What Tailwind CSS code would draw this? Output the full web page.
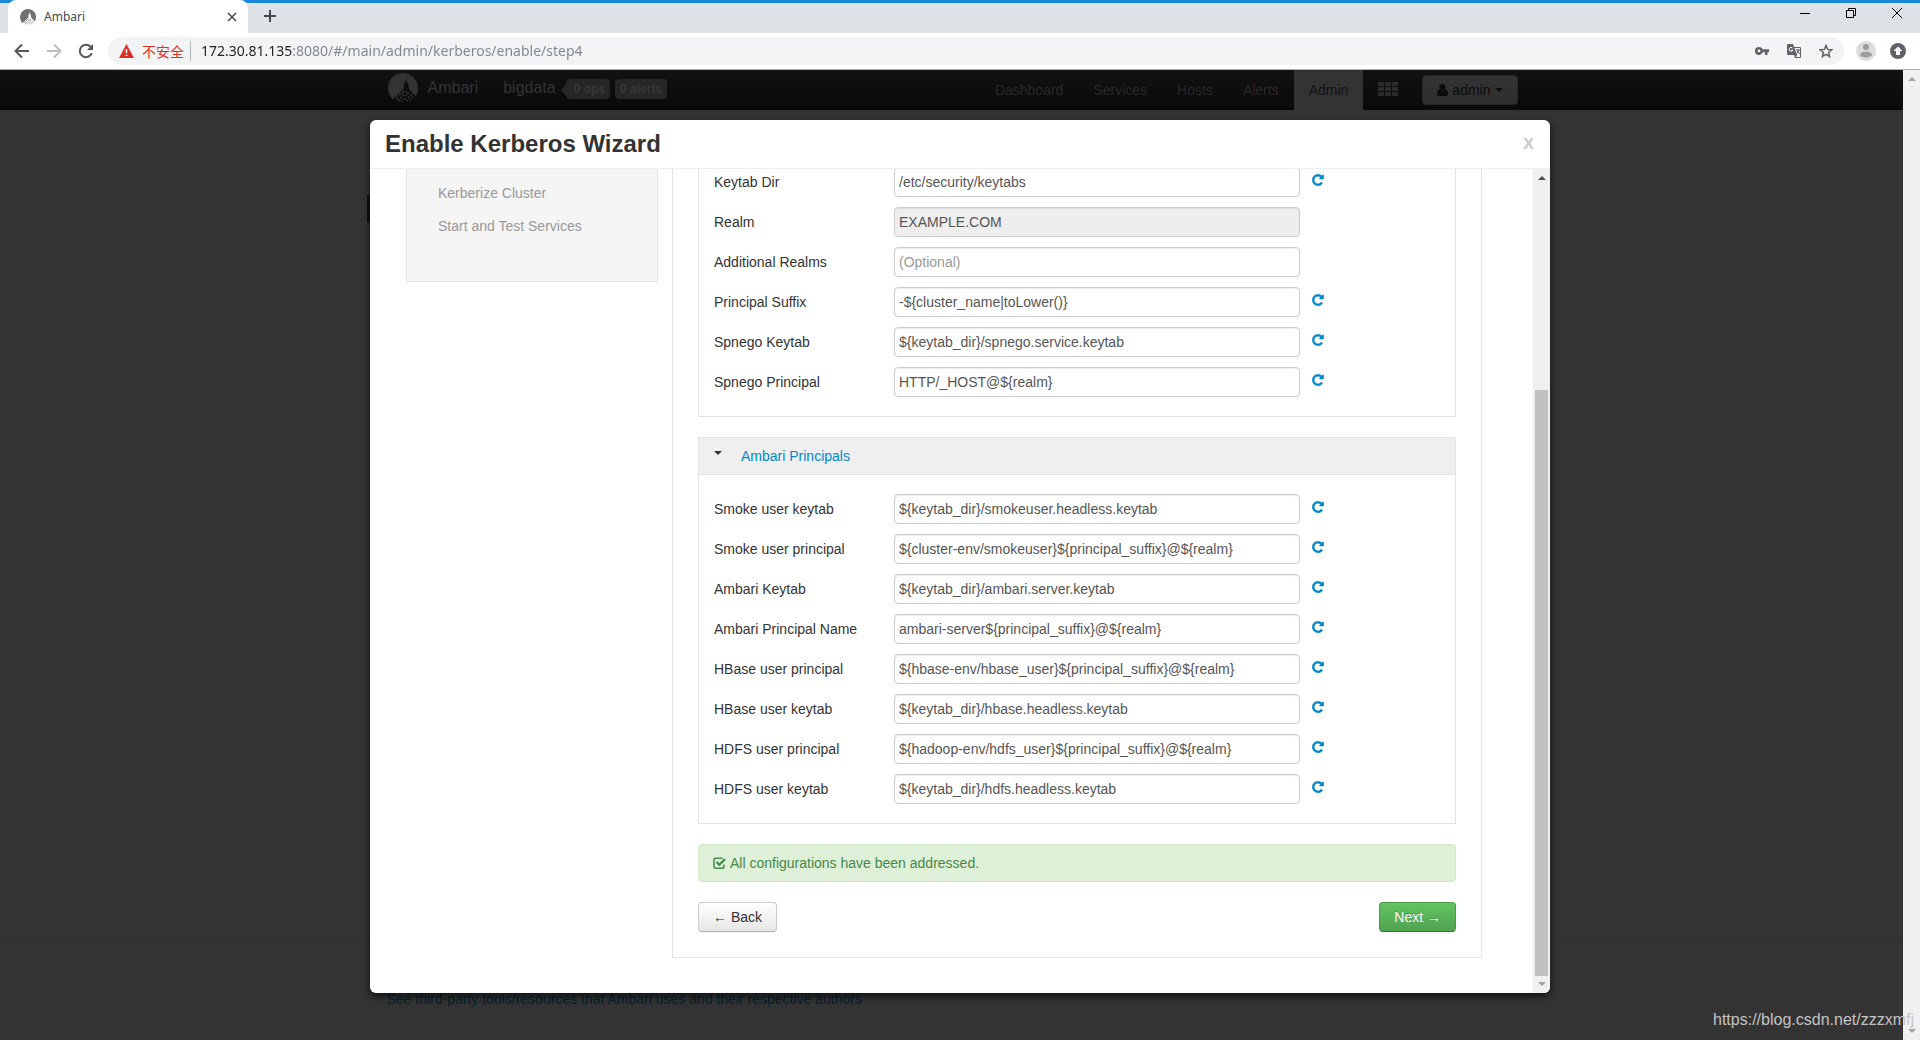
<!DOCTYPE html>
<html lang="en">
<head>
<meta charset="utf-8">
<title>Ambari</title>
<script src="https://cdn.jsdelivr.net/npm/@tailwindcss/browser@4"></script>
</head>
<body class="flex h-screen flex-col overflow-hidden bg-[#333] font-['Liberation_Sans',Arial,sans-serif] text-sm leading-5 text-[#333]">
<svg class="hidden" aria-hidden="true">
  <symbol id="refresh" viewBox="-40 -40 1616 1616"><path fill="currentColor" stroke="currentColor" stroke-width="70" d="M1536 128v448q0 26-19 45t-45 19h-448q-42 0-59-40-17-39 14-69l138-138q-148-137-349-137-104 0-198.500 40.500t-163.500 109.500-109.500 163.500-40.500 198.500 40.500 198.500 109.500 163.500 163.500 109.500 198.500 40.500q119 0 225-52t179-147q7-10 23-12 14 0 25 9l137 138q9 8 9.500 20.500t-7.500 22.500q-109 132-264 204.500t-327 72.500q-156 0-298-61t-245-164-164-245-61-298 61-298 164-245 245-164 298-61q147 0 284.500 55.500t244.500 156.500l130-129q29-31 70-14 39 17 39 59z"/></symbol>
  <symbol id="logo" viewBox="0 0 30 30"><path fill="currentColor" d="M5 26.200A15 15 0 1 1 27.500 23.300L21 16 20 10.500 18.700 8.500 18.200 4 17.700 8.500 16.300 10.500 15.500 16z"/><path fill="none" stroke="currentColor" stroke-width="1.400" stroke-dasharray="3.500 1" d="M8 26.500q3.500-6 8.500-8 6 1.500 9 7"/><path fill="none" stroke="currentColor" stroke-width="1.800" stroke-dasharray="2 1.200" d="M10.500 28.300q2-5 6-6.500 4.500 1.500 6 5.500"/><path fill="none" stroke="currentColor" stroke-width="1.500" stroke-dasharray="1.500 1" d="M13.500 29q1-3 3-3.500 2 .5 3 3"/></symbol>
</svg>

<!-- Browser tab strip -->
<header class="shrink-0 bg-[#dee1e6]">
  <div class="flex h-[33px] items-stretch border-t-[3px] border-[#1a86d9]">
    <div class="w-2 rounded-br-lg"></div>
    <div class="-mt-[3px] flex w-60 items-center rounded-t-lg bg-white pr-[11px] pl-3">
      <svg class="size-4 text-[#707070]"><use href="#logo"/></svg>
      <span class="ml-2 flex-1 font-['Noto_Sans',sans-serif] text-xs text-[#45494d]">Ambari</span>
      <button aria-label="Close tab"><svg class="size-[10px]" viewBox="0 0 10 10" stroke="#45494d" stroke-width="1.500"><path d="M1 1l8 8M9 1l-8 8"/></svg></button>
    </div>
    <button aria-label="New tab" class="ml-4 pb-1"><svg class="size-3" viewBox="0 0 12 12" stroke="#45494d" stroke-width="2"><path d="M6 0v12M0 6h12"/></svg></button>
    <div class="flex-1"></div>
    <div class="flex items-center gap-9 pr-[18px] pb-[10px]">
      <button aria-label="Minimize"><svg class="size-[10px]" viewBox="0 0 10 10" stroke="#000"><path d="M0 5.500h10"/></svg></button>
      <button aria-label="Restore"><svg class="size-[10px]" viewBox="0 0 10 10" stroke="#000" fill="none"><path d="M.5 2.500h7v7h-7zM2.500 2.500v-2h7v7h-2"/></svg></button>
      <button aria-label="Close window"><svg class="size-[10px]" viewBox="0 0 10 10" stroke="#000"><path d="M0 0l10 10M10 0l-10 10"/></svg></button>
    </div>
  </div>
</header>

<!-- Toolbar -->
<div class="flex h-[37px] shrink-0 items-center border-b border-[#b0b0b0] bg-white">
  <div class="flex w-[108px] items-center gap-4 pl-[14px]">
    <button aria-label="Back"><svg class="size-4" viewBox="0 0 16 16" fill="none" stroke="#55595d" stroke-width="2"><path d="M15 8H2M8 1.500L1.500 8 8 14.500"/></svg></button>
    <button aria-label="Forward"><svg class="size-4" viewBox="0 0 16 16" fill="none" stroke="#babcbe" stroke-width="2"><path d="M1 8h13M8 1.500L14.500 8 8 14.500"/></svg></button>
    <button aria-label="Reload"><svg class="size-4" viewBox="0 0 16 16" fill="none" stroke="#55595d" stroke-width="2"><path d="M13.800 10.200A6.200 6.200 0 1 1 12.500 3.700L14 5.200"/><path fill="#55595d" stroke="none" d="M15 1v6H9z"/></svg></button>
  </div>
  <div class="flex h-7 flex-1 items-center rounded-full bg-[#f1f3f4] px-[11px]">
    <svg class="h-[14px] w-[15px]" viewBox="0 0 15 14"><path fill="#d93025" d="M7.500 0L15 14H0z"/><path stroke="#fff" stroke-width="1.500" d="M7.500 5v4M7.500 10.500V12"/></svg>
    <span class="ml-2 font-['Noto_Sans_CJK_SC',sans-serif] text-sm text-[#d93025]">不安全</span>
    <span class="mr-[10px] ml-[6px] h-5 w-px bg-[#b4b7ba]"></span>
    <!-- The host part is drawn darker than the path -->
    <input type="text" aria-label="Address" value="172.30.81.135:8080/#/main/admin/kerberos/enable/step4" class="min-w-0 flex-1 bg-[linear-gradient(to_right,#202124_91px,#80868b_91px)] bg-clip-text font-['Noto_Sans',sans-serif] text-sm text-transparent">
    <div class="flex items-center gap-[18px]">
      <svg class="size-[14px]" viewBox="0 0 14 14"><path fill="#5f6368" fill-rule="evenodd" d="M4 3a4 4 0 1 0 3.700 5.300H10V11h2.500V8.300H14V5.300H7.700A4 4 0 0 0 4 3zm0 2.600a1.300 1.300 0 1 1 0 2.700 1.300 1.300 0 0 1 0-2.700z"/></svg>
      <svg class="size-[14px]" viewBox="0 0 14 14"><path fill="#5f6368" d="M1 0h5l1 3h6q1 0 1 1v9q0 1-1 1H8l-1-3H1q-1 0-1-1V1q0-1 1-1z"/><path fill="#f1f3f4" d="M7.500 4H13v9H9l1-2z"/><path fill="none" stroke="#f1f3f4" d="M5.500 4A2 2 0 1 0 6 6H4"/><path fill="none" stroke="#5f6368" d="M9 6h4M11 5v1M12 6q-1 3-3 4M10 7l3 3"/></svg>
      <svg class="size-[14px]" viewBox="0 0 14 14" fill="none" stroke="#5f6368" stroke-width="1.500"><path d="M7 1.500l1.600 3.900 4.200.3-3.200 2.700 1 4.100L7 10.300l-3.600 2.200 1-4.100L1.200 5.700l4.200-.3z"/></svg>
    </div>
  </div>
  <div class="flex items-center gap-[14px] pr-[14px] pl-3">
    <svg class="size-5" viewBox="0 0 20 20"><circle cx="10" cy="10" r="10" fill="#dcdcdc"/><circle cx="10" cy="6" r="3" fill="#9c9c9c"/><ellipse cx="10" cy="13.500" rx="6" ry="3" fill="#9c9c9c"/></svg>
    <svg class="size-4" viewBox="0 0 16 16"><circle cx="8" cy="8" r="8" fill="#5f6368"/><path fill="#fff" d="M8 3.500L12.500 8H10v4H6V8H3.500z"/></svg>
  </div>
</div>

<!-- Page viewport -->
<div class="relative flex min-h-0 flex-1">
  <div class="flex min-w-0 flex-1 flex-col">
    <nav class="flex h-10 shrink-0 bg-linear-to-b from-[#121212] to-[#090909]">
      <div class="mx-auto flex w-full max-w-[1170px] items-center pr-[19px] pl-[21px]">
        <svg class="mb-1 size-[30px] text-[#333]"><use href="#logo"/></svg>
        <a href="#" class="ml-[10px] pb-1 text-base text-[#333]">Ambari</a>
        <a href="#" class="ml-[25px] pb-1 text-base text-[#333]">bigdata</a>
        <span class="ml-[5px] h-0 w-0 border-y-[6px] border-r-[5px] border-y-transparent border-r-[#262626]"></span>
        <a href="#" class="mb-[2px] h-5 rounded bg-[#262626] pr-[5px] pl-2 text-xs leading-5 font-bold text-[#383838]">0 ops</a>
        <a href="#" class="mb-[2px] ml-[5px] h-5 rounded bg-[#262626] px-[5px] text-xs leading-5 font-bold text-[#383838]">0 alerts</a>
        <div class="ml-auto flex h-10 items-stretch leading-10 text-[#292929]">
          <a href="#" class="px-[15px]">Dashboard</a>
          <a href="#" class="px-[15px]">Services</a>
          <a href="#" class="px-[15px]">Hosts</a>
          <a href="#" class="px-[15px]">Alerts</a>
          <a href="#" class="bg-[#333] px-[15px] text-[#111]">Admin</a>
          <button aria-label="Views" class="flex items-center pr-6 pb-[2px] pl-[15px]"><svg class="h-[14px] w-5" viewBox="0 0 20 14" fill="#2c2c2c"><path d="M0 0h6v4H0zM7 0h6v4H7zM14 0h6v4h-6zM0 5h6v4H0zM7 5h6v4H7zM14 5h6v4h-6zM0 10h6v4H0zM7 10h6v4H7zM14 10h6v4h-6z"/></svg></button>
          <button class="my-[5px] flex items-center rounded border border-[#262626] bg-linear-to-b from-[#333] to-[#2e2e2e] px-[14px] leading-5 text-[#0c0c0c]">
            <svg class="mr-1 h-3 w-[11px]" viewBox="0 0 11 12" fill="#0a0a0a"><circle cx="5.500" cy="3" r="3"/><path d="M2.500 5.300q3 2.200 6 0Q11 6 11 10q0 2-2 2H2q-2 0-2-2 0-4 2.500-4.700z"/></svg>admin
            <span class="ml-1 h-0 w-0 border-x-4 border-t-4 border-x-transparent border-t-[#0a0a0a]"></span>
          </button>
        </div>
      </div>
    </nav>
    <div class="min-h-0 flex-1 pt-[85px]">
      <div class="mx-auto h-7 w-full max-w-[1170px] bg-[#111]"></div>
    </div>
    <footer class="h-[101px] shrink-0 border-t border-[#2d2d2d]">
      <div class="mx-auto w-full max-w-[1170px] px-5 pt-[49px]">
        <a href="#" class="text-[#06202e]">See third-party tools/resources that Ambari uses and their respective authors</a>
      </div>
    </footer>
  </div>
  <!-- Window scrollbar -->
  <div class="flex w-[17px] shrink-0 flex-col items-center justify-between bg-[#f0f0f0] py-[7px]">
    <span class="h-0 w-0 border-x-4 border-b-4 border-x-transparent border-b-[#a3a3a3]"></span>
    <span class="h-0 w-0 border-x-4 border-t-4 border-x-transparent border-t-[#a3a3a3]"></span>
  </div>

  <!-- Wizard dialog -->
  <div role="dialog" aria-labelledby="wizard-title" class="absolute inset-x-0 top-[50px] bottom-[47px] mx-auto flex w-full max-w-[1180px] flex-col overflow-hidden rounded-md bg-white shadow-[0_3px_7px_rgba(0,0,0,0.7)]">
    <div class="flex h-[49px] shrink-0 items-center justify-between border-b border-[#eee] pr-4 pl-[15px]">
      <h1 id="wizard-title" class="text-2xl font-bold">Enable Kerberos Wizard</h1>
      <button aria-label="Close" class="pb-1 text-xl leading-5 font-bold text-[#ccc]">x</button>
    </div>
    <div class="flex min-h-0 flex-1">
      <div class="min-w-0 flex-1 overflow-hidden">
        <div class="-mt-0.5 flex items-start pr-[51px] pl-9">
          <aside class="h-[115px] w-[252px] shrink-0 border border-t-0 border-[#e3e3e3] bg-[#f5f5f5] pt-4 pl-[31px] text-[#999]">
            <p class="mb-[13px]">Kerberize Cluster</p>
            <p>Start and Test Services</p>
          </aside>
          <main class="ml-[14px] min-w-0 flex-1 border border-t-0 border-[#e3e3e3] px-[25px] pb-[25px]">
            <section class="flex flex-col gap-[10px] border border-t-0 border-[#e3e3e3] pb-[19px] pl-[15px]" id="general"></section>
            <section class="mt-5 border border-[#e3e3e3]">
              <h2 class="flex h-[37px] items-center border-b border-[#e3e3e3] bg-[#efefef] pl-[15px]">
                <span class="mb-[6px] h-0 w-0 border-x-4 border-t-4 border-x-transparent border-t-[#333]"></span>
                <a href="#" class="ml-[19px] text-[#08c]">Ambari Principals</a>
              </h2>
              <div class="flex flex-col gap-[10px] pt-[19px] pb-[19px] pl-[15px]" id="principals"></div>
            </section>
            <div role="status" class="mt-5 flex h-[38px] items-center rounded border border-[#d0e9c6] bg-[#dff0d8] pl-[14px] text-[#468847]">
              <svg class="mr-1 h-3 w-[13px]" viewBox="0 0 13 12" fill="none" stroke="#468847"><path stroke-width="1.500" d="M9.500 1.200H2.500q-1.500 0-1.500 1.500v7q0 1.500 1.500 1.500h7q1.500 0 1.500-1.500V7.500"/><path stroke-width="2.200" d="M3.500 5l2.800 2.800 5.700-5.700"/></svg>
              All configurations have been addressed.
            </div>
            <div class="mt-5 flex justify-between">
              <button class="h-[30px] rounded border border-[#ccc] border-b-[#b3b3b3] bg-linear-to-b from-white to-[#e6e6e6] px-[14px] shadow-[0_1px_2px_rgba(0,0,0,0.05)]"><span class="font-['Noto_Sans',sans-serif]">←</span> Back</button>
              <button class="h-[30px] rounded border border-[#4a9a4a] border-b-[#387038] bg-linear-to-b from-[#62c462] to-[#51a351] px-[14px] text-white shadow-[0_1px_2px_rgba(0,0,0,0.05)] text-shadow-[0_-1px_0_rgba(0,0,0,0.25)]">Next <span class="font-['Noto_Sans',sans-serif]">→</span></button>
            </div>
          </main>
        </div>
      </div>
      <!-- Dialog scrollbar -->
      <div class="flex w-[17px] shrink-0 flex-col items-center bg-[#f0f0f0] py-[7px]">
        <span class="h-0 w-0 border-x-4 border-b-4 border-x-transparent border-b-[#505050]"></span>
        <div class="flex w-[13px] flex-1 flex-col pb-[6px]"><span class="flex-[210]"></span><span class="flex-[586] bg-[#c1c1c1]"></span></div>
        <span class="h-0 w-0 border-x-4 border-t-4 border-x-transparent border-t-[#a3a3a3]"></span>
      </div>
    </div>
  </div>
  <p class="absolute right-[6px] bottom-2 text-base text-[#c4c4c4]">https://blog.csdn.net/zzzxmfj</p>
</div>

<template id="row">
  <div class="flex items-center">
    <label class="w-[180px] shrink-0"></label>
    <input type="text" class="h-[30px] w-full max-w-[406px] min-w-0 rounded-sm border border-[#ccc] px-1 text-[#555] shadow-[inset_0_1px_1px_rgba(0,0,0,0.075)] placeholder:text-[#999] disabled:bg-[#eee]">
    <button aria-label="Reset" class="mb-1 ml-3 shrink-0 text-[#08c]"><svg class="size-3"><use href="#refresh"/></svg></button>
  </div>
</template>
<script>
const groups = {
  general: [
    ["Keytab Dir", "/etc/security/keytabs"],
    ["Realm", "EXAMPLE.COM", { disabled: true, noReset: true }],
    ["Additional Realms", "", { placeholder: "(Optional)", noReset: true }],
    ["Principal Suffix", "-${cluster_name|toLower()}"],
    ["Spnego Keytab", "${keytab_dir}/spnego.service.keytab"],
    ["Spnego Principal", "HTTP/_HOST@${realm}"],
  ],
  principals: [
    ["Smoke user keytab", "${keytab_dir}/smokeuser.headless.keytab"],
    ["Smoke user principal", "${cluster-env/smokeuser}${principal_suffix}@${realm}"],
    ["Ambari Keytab", "${keytab_dir}/ambari.server.keytab"],
    ["Ambari Principal Name", "ambari-server${principal_suffix}@${realm}"],
    ["HBase user principal", "${hbase-env/hbase_user}${principal_suffix}@${realm}"],
    ["HBase user keytab", "${keytab_dir}/hbase.headless.keytab"],
    ["HDFS user principal", "${hadoop-env/hdfs_user}${principal_suffix}@${realm}"],
    ["HDFS user keytab", "${keytab_dir}/hdfs.headless.keytab"],
  ],
};
for (const [group, rows] of Object.entries(groups)) {
  rows.forEach(([name, value, opts = {}], i) => {
    const row = document.getElementById("row").content.cloneNode(true);
    const label = row.querySelector("label"), input = row.querySelector("input");
    label.textContent = name;
    label.htmlFor = input.id = group + "-" + i;
    input.value = value;
    if (opts.placeholder) input.placeholder = opts.placeholder;
    if (opts.disabled) input.disabled = true;
    if (opts.noReset) row.querySelector("button").remove();
    document.getElementById(group).append(row);
  });
}
</script>
</body>
</html>
